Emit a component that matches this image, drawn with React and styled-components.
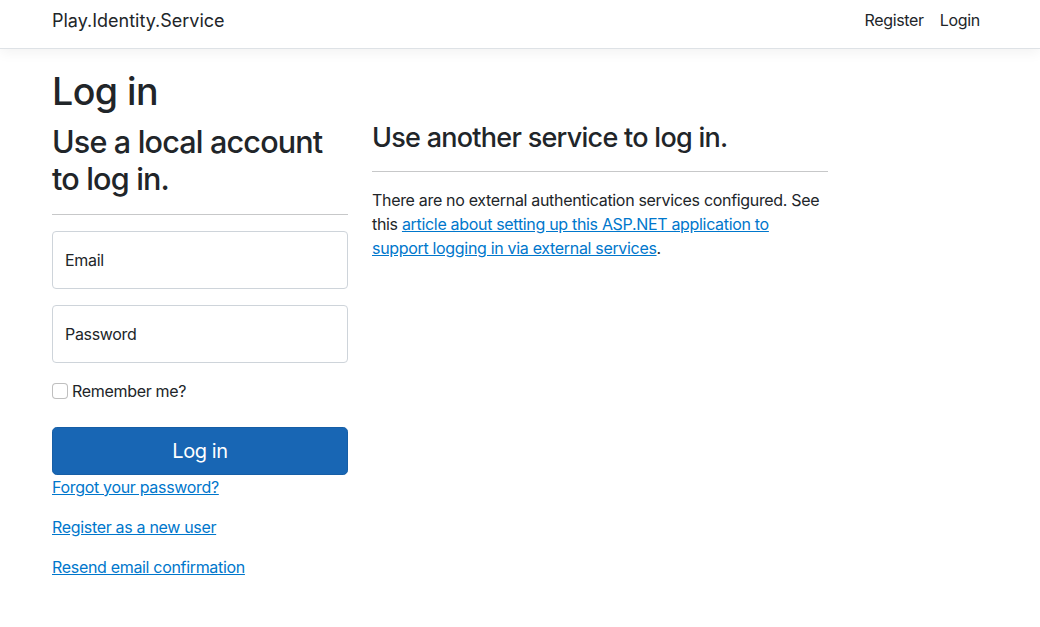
import styled, { createGlobalStyle } from "styled-components";

const GlobalStyle = createGlobalStyle`
  * { box-sizing: border-box; }
  body {
    margin: 0;
    font-family: Inter, "Liberation Sans", sans-serif;
    font-size: 16px;
    line-height: 1.5;
    letter-spacing: -0.02em;
    color: #212529;
    background: #fff;
  }
`;

const Navbar = styled.header`
  height: 49px;
  border-bottom: 1px solid #dee2e6;
  box-shadow: 0 4px 12px rgba(0, 0, 0, 0.05);
  margin-bottom: 16px;
`;

const NavInner = styled.div`
  width: 960px;
  margin: 0 auto;
  padding: 0 12px 8px;
  height: 100%;
  display: flex;
  align-items: center;
  justify-content: space-between;
`;

const Brand = styled.a`
  font-size: 18px;
  letter-spacing: 0;
  color: #212529;
  text-decoration: none;
`;

const NavLinks = styled.nav`
  display: flex;
`;

const NavLink = styled.a`
  padding: 0 8px;
  color: #212529;
  text-decoration: none;
`;

const Container = styled.main`
  width: 960px;
  margin: 0 auto;
  padding: 4px 12px 16px;
`;

const Title = styled.h1`
  font-size: 37.6px;
  font-weight: 500;
  line-height: 1.2;
  letter-spacing: -0.015em;
  margin: 0 0 8px;
`;

const Row = styled.div`
  display: flex;
  margin: 0 -12px;
`;

const Col = styled.section`
  width: ${(p) => p.$width}px;
  padding: 0 12px;
`;

const Heading = styled.h2`
  font-size: ${(p) => p.$size}px;
  font-weight: 500;
  line-height: ${(p) => p.$lh};
  letter-spacing: -0.027em;
  margin: ${(p) => p.$top || 0}px 0 8px;
`;

const Rule = styled.hr`
  margin: 16px 0;
  border: 0;
  border-top: 1px solid #212529;
  opacity: 0.25;
`;

const Field = styled.label`
  display: flex;
  align-items: center;
  height: 58px;
  padding: 0 12px;
  margin-bottom: 16px;
  border: 1px solid #ced4da;
  border-radius: 4px;
  background: #fff;
  cursor: text;
`;

const CheckRow = styled.label`
  display: flex;
  align-items: center;
  gap: 4px;
  height: 24px;
  margin-bottom: 24px;
`;

const Checkbox = styled.span`
  width: 16px;
  height: 16px;
  border: 1px solid rgba(0, 0, 0, 0.25);
  border-radius: 4px;
  background: #fff;
`;

const PrimaryButton = styled.button`
  display: block;
  width: 100%;
  height: 48px;
  padding: 8px 16px;
  font-family: inherit;
  font-size: 20px;
  letter-spacing: -0.02em;
  line-height: 1.5;
  color: #fff;
  background: #1866b4;
  border: 1px solid #165ea6;
  border-radius: 4.8px;
  cursor: pointer;
`;

const LinkPara = styled.p`
  margin: 0 0 16px;
`;

const Link = styled.a`
  color: #0077cc;
  text-decoration: underline;
`;

const Text = styled.p`
  margin: 0 0 16px;
`;

function App() {
  return (
    <>
      <GlobalStyle />
      <Navbar>
        <NavInner>
          <Brand href="#">Play.Identity.Service</Brand>
          <NavLinks>
            <NavLink href="#">Register</NavLink>
            <NavLink href="#">Login</NavLink>
          </NavLinks>
        </NavInner>
      </Navbar>
      <Container>
        <Title>Log in</Title>
        <Row>
          <Col $width={320}>
            <Heading $size={30.56} $lh={1.22} $top={1}>
              Use a local account to log in.
            </Heading>
            <Rule />
            <Field>Email</Field>
            <Field>Password</Field>
            <CheckRow>
              <Checkbox />
              Remember me?
            </CheckRow>
            <PrimaryButton>Log in</PrimaryButton>
            <LinkPara>
              <Link href="#">Forgot your password?</Link>
            </LinkPara>
            <LinkPara>
              <Link href="#">Register as a new user</Link>
            </LinkPara>
            <LinkPara>
              <Link href="#">Resend email confirmation</Link>
            </LinkPara>
          </Col>
          <Col $width={480}>
            <Heading as="h3" $size={27} $lh={1.2}>
              Use another service to log in.
            </Heading>
            <Rule />
            <Text>
              There are no external authentication services configured. See this{" "}
              <Link href="#">
                article about setting up this ASP.NET application to support
                logging in via external services
              </Link>
              .
            </Text>
          </Col>
        </Row>
      </Container>
    </>
  );
}

export default App;
